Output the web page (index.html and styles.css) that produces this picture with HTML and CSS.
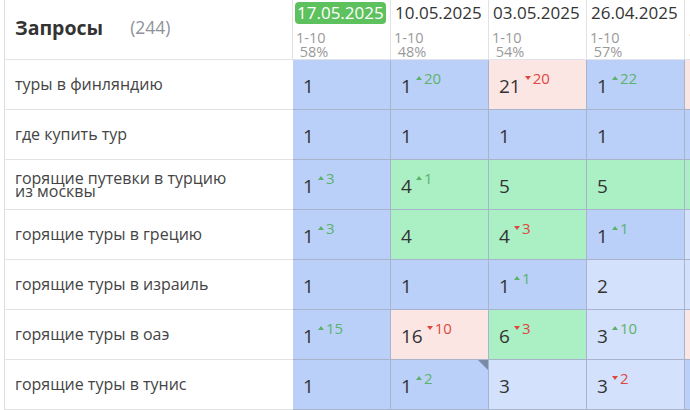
FILE: index.html
```html
<!DOCTYPE html>
<html lang="ru">
<head>
    <meta charset="UTF-8">
    <title>Запросы</title>
    <link rel="stylesheet" href="styles.css">
</head>
<body>
    <div class="board">
        <div class="row head">
            <div class="query head-title"><b>Запросы</b><span class="count">(244)</span></div>
            <div class="date-cell"><span class="date current">17.05.2025</span><span class="meta">1-10<br>&nbsp;58%</span></div>
            <div class="date-cell"><span class="date">10.05.2025</span><span class="meta">1-10<br>&nbsp;48%</span></div>
            <div class="date-cell"><span class="date">03.05.2025</span><span class="meta">1-10<br>&nbsp;54%</span></div>
            <div class="date-cell"><span class="date">26.04.2025</span><span class="meta">1-10<br>&nbsp;57%</span></div>
            <div class="date-cell"><span class="date">19.04.2025</span><span class="meta">1-10<br>&nbsp;55%</span></div>
        </div>

        <div class="row">
            <div class="query">туры в финляндию</div>
            <div class="pos top">1</div>
            <div class="pos top">1<span class="delta up">20</span></div>
            <div class="pos low">21<span class="delta down">20</span></div>
            <div class="pos top">1<span class="delta up">22</span></div>
            <div class="pos low">1</div>
        </div>

        <div class="row">
            <div class="query">где купить тур</div>
            <div class="pos top">1</div>
            <div class="pos top">1</div>
            <div class="pos top">1</div>
            <div class="pos top">1</div>
            <div class="pos top">1</div>
        </div>

        <div class="row">
            <div class="query">горящие путевки в турцию<br>из москвы</div>
            <div class="pos top">1<span class="delta up">3</span></div>
            <div class="pos mid">4<span class="delta up">1</span></div>
            <div class="pos mid">5</div>
            <div class="pos mid">5</div>
            <div class="pos mid">5</div>
        </div>

        <div class="row">
            <div class="query">горящие туры в грецию</div>
            <div class="pos top">1<span class="delta up">3</span></div>
            <div class="pos mid">4</div>
            <div class="pos mid">4<span class="delta down">3</span></div>
            <div class="pos top">1<span class="delta up">1</span></div>
            <div class="pos near">2</div>
        </div>

        <div class="row">
            <div class="query">горящие туры в израиль</div>
            <div class="pos top">1</div>
            <div class="pos top">1</div>
            <div class="pos top">1<span class="delta up">1</span></div>
            <div class="pos near">2</div>
            <div class="pos near">2</div>
        </div>

        <div class="row">
            <div class="query">горящие туры в оаэ</div>
            <div class="pos top">1<span class="delta up">15</span></div>
            <div class="pos low">16<span class="delta down">10</span></div>
            <div class="pos mid">6<span class="delta down">3</span></div>
            <div class="pos near">3<span class="delta up">10</span></div>
            <div class="pos low">13</div>
        </div>

        <div class="row">
            <div class="query">горящие туры в тунис</div>
            <div class="pos top">1</div>
            <div class="pos top noted">1<span class="delta up">2</span></div>
            <div class="pos near">3</div>
            <div class="pos near">3<span class="delta down">2</span></div>
            <div class="pos top">1</div>
        </div>
    </div>
</body>
</html>
```

FILE: styles.css
```css
html, body {
    margin: 0;
    padding: 0;
    background: #fff;
}
body {
    font-family: "Open Sans", "Noto Sans", sans-serif;
    color: #333;
    overflow: hidden;
}
.board {
    padding-left: 4px;
    width: 800px;
}
.row {
    display: grid;
    grid-template-columns: 289px repeat(5, 98px);
    height: 50px;
}
.row.head {
    height: 60px;
}
.query {
    box-sizing: border-box;
    border-left: 1px solid #dedede;
    border-bottom: 1px solid #e2e2e2;
    padding-left: 10px;
    display: flex;
    align-items: center;
    font-size: 16px;
    line-height: 13px;
    color: #444;
}
.head-title {
    border-right: 1px solid #e2e2e2;
    padding-bottom: 5px;
    font-size: 19.5px;
    color: #333;
}
.count {
    margin-left: 27px;
    font-size: 17.5px;
    color: #8d929b;
}
.date-cell {
    box-sizing: border-box;
    border-right: 1px solid #e2e2e2;
    border-bottom: 1px solid #dfe3ea;
    padding: 2px 0 0 2px;
    display: flex;
    flex-direction: column;
    align-items: flex-start;
    overflow: hidden;
}
.date {
    font-size: 17px;
    line-height: 22px;
    padding: 0 2px;
    border-radius: 4px;
    color: #333;
}
.date.current {
    background: #5dc15d;
    color: #fff;
}
.meta {
    margin-top: 7px;
    padding-left: 1px;
    font-size: 14.5px;
    line-height: 14px;
    color: #9a9a9a;
}
.pos {
    box-sizing: border-box;
    position: relative;
    border-right: 1px solid #a7b4cc;
    border-bottom: 1px solid #a7b4cc;
    padding: 3px 0 0 10px;
    display: flex;
    align-items: center;
    font-size: 19px;
    color: #333;
}
.pos.top {
    background: #bad0f9;
}
.pos.near {
    background: #d3e1fc;
}
.pos.mid {
    background: #aaf0c4;
}
.pos.low {
    background: #fce6e4;
}
.pos.noted::after {
    content: "";
    position: absolute;
    top: 0;
    right: 0;
    border-top: 10px solid #7b8aa6;
    border-left: 10px solid transparent;
}
.delta {
    align-self: flex-start;
    margin: 7px 0 0 4px;
    font-size: 15px;
    line-height: 17px;
}
.delta::before {
    content: "";
    display: inline-block;
    margin-right: 2px;
    vertical-align: 4px;
    border-left: 3px solid transparent;
    border-right: 3px solid transparent;
}
.delta.up {
    color: #5bb36a;
}
.delta.up::before {
    border-bottom: 4px solid #5bb36a;
}
.delta.down {
    color: #e0463f;
}
.delta.down::before {
    border-top: 4px solid #e0463f;
}
```
